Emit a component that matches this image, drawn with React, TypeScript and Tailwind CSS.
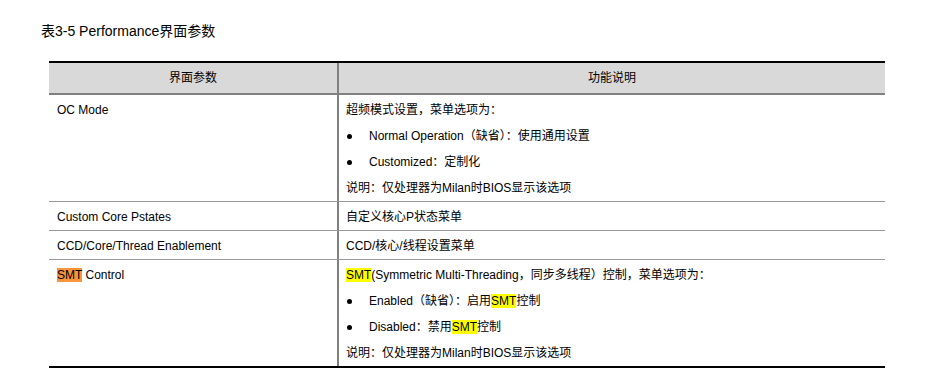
const font = { fontFamily: '"Liberation Sans", Arial, "Noto Sans CJK SC", sans-serif' };

function Hl({ children, orange }: { children: React.ReactNode; orange?: boolean }) {
  return <span className={orange ? 'bg-[#f7953b]' : 'bg-[#ffff00]'}>{children}</span>;
}

function Bullet({ children }: { children: React.ReactNode }) {
  return (
    <div className="flex items-center">
      <span className="w-[23px] shrink-0 pl-[1px]">
        <span className="block h-[5px] w-[5px] rounded-full bg-black" />
      </span>
      <span>{children}</span>
    </div>
  );
}

type Row = { name: React.ReactNode; desc: React.ReactNode[] };

const ROWS: Row[] = [
  {
    name: 'OC Mode',
    desc: [
      '超频模式设置，菜单选项为：',
      <Bullet>Normal Operation（缺省）：使用通用设置</Bullet>,
      <Bullet>Customized：定制化</Bullet>,
      '说明：仅处理器为Milan时BIOS显示该选项',
    ],
  },
  { name: 'Custom Core Pstates', desc: ['自定义核心P状态菜单'] },
  { name: 'CCD/Core/Thread Enablement', desc: ['CCD/核心/线程设置菜单'] },
  {
    name: (
      <>
        <Hl orange>SMT</Hl> Control
      </>
    ),
    desc: [
      <>
        <Hl>SMT</Hl>(Symmetric Multi-Threading，同步多线程）控制，菜单选项为：
      </>,
      <Bullet>
        Enabled（缺省）：启用<Hl>SMT</Hl>控制
      </Bullet>,
      <Bullet>
        Disabled：禁用<Hl>SMT</Hl>控制
      </Bullet>,
      '说明：仅处理器为Milan时BIOS显示该选项',
    ],
  },
];

export default function App() {
  return (
    <div className="h-[384px] w-[931px] bg-white text-black" style={font}>
      <div className="pl-[41px] pt-[21px] text-[14px] leading-[20px]">表3-5 Performance界面参数</div>
      <div className="ml-[49px] mt-[20px] w-[836px] border-y-2 border-black text-[12px] leading-[18px]">
        <div className="grid grid-cols-[290px_1fr] border-b-2 border-[#808080] bg-[#d9d9d9]">
          <div className="flex h-[30px] items-center justify-center border-r-2 border-[#808080]">界面参数</div>
          <div className="flex h-[30px] items-center justify-center">功能说明</div>
        </div>
        {ROWS.map((r, i) => (
          <div
            key={i}
            className="grid grid-cols-[290px_1fr] border-b border-[#999] last:border-b-0"
          >
            <div className="border-r-2 border-[#808080] px-[8px] pb-[4px] pt-[6px]">{r.name}</div>
            <div className="flex flex-col gap-[8px] px-[7px] pb-[4px] pt-[6px]">
              {r.desc.map((d, j) => (
                <div key={j}>{d}</div>
              ))}
            </div>
          </div>
        ))}
      </div>
    </div>
  );
}
